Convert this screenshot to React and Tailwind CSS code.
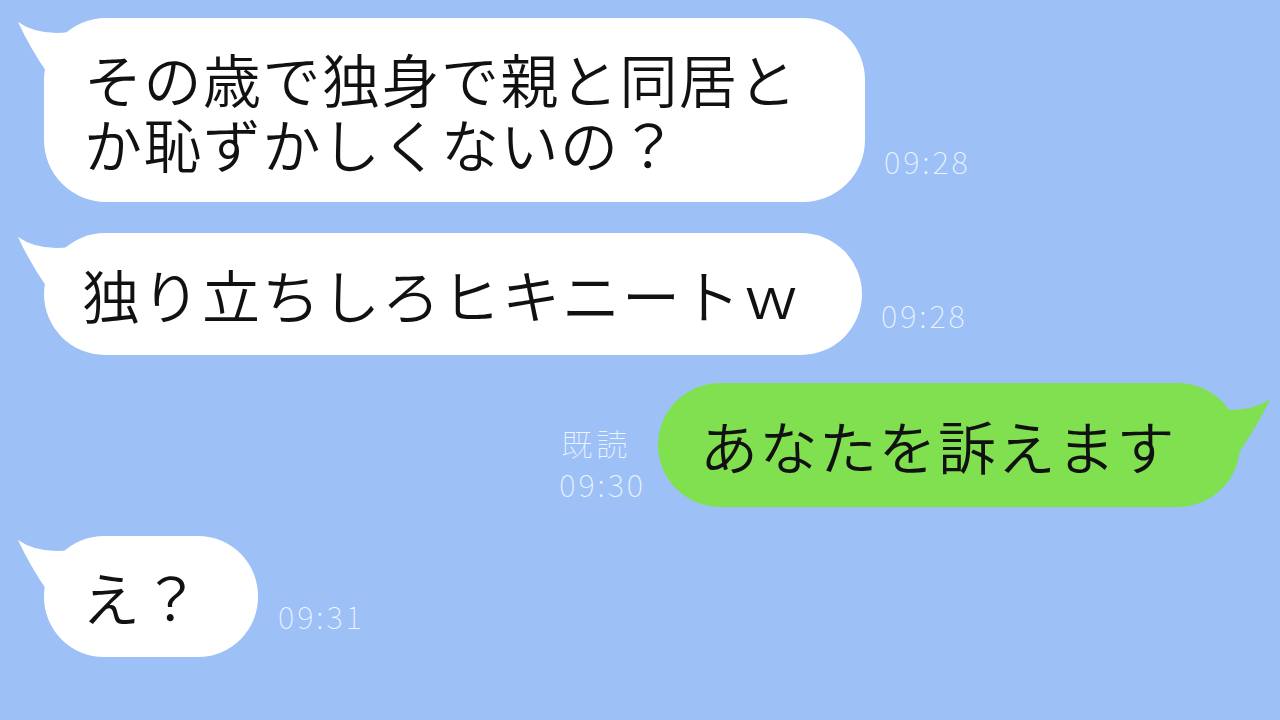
import React from "react";

const jp = { fontFamily: '"Noto Sans CJK JP", "Noto Sans", sans-serif' };

function LeftTail() {
  return (
    <svg className="absolute left-[-30px] top-0" width="80" height="64" viewBox="0 0 80 64">
      <path d="M4 4 Q 24 18 56 14 L 72 50 L 34 56 Q 16 30 4 4 Z" fill="#ffffff" />
    </svg>
  );
}

function RightTail() {
  return (
    <svg className="absolute right-[-34px] top-[12px]" width="80" height="64" viewBox="0 0 80 64">
      <path d="M76 4 Q 56 18 24 14 L 8 50 L 46 56 Q 64 30 76 4 Z" fill="#80e04f" />
    </svg>
  );
}

function Time({ children, className = "" }) {
  return (
    <div
      className={"text-[31px] leading-none font-thin text-[#eef4ff] tracking-[3px] " + className}
      style={jp}
    >
      {children}
    </div>
  );
}

export default function App() {
  return (
    <div className="w-[1280px] h-[720px] bg-[#9dc1f7] overflow-hidden flex flex-col pt-[18px]" style={jp}>
      <div className="flex items-end pl-[44px]">
        <div className="relative w-[821px] h-[184px] rounded-[62px] bg-white pl-[40px] pt-[28px]">
          <LeftTail />
          <div className="relative text-[58px] leading-[65px] font-[350] tracking-[1.5px] text-[#111] whitespace-nowrap">
            <div>その歳で独身で親と同居と</div>
            <div>か恥ずかしくないの？</div>
          </div>
        </div>
        <Time className="ml-[19px] mb-[26px]">09:28</Time>
      </div>

      <div className="flex items-end pl-[44px] mt-[31px]">
        <div className="relative w-[818px] h-[122px] rounded-[61px] bg-white pl-[38px] flex items-center">
          <LeftTail />
          <div className="relative text-[58px] leading-[65px] font-[350] tracking-[2px] text-[#111] whitespace-nowrap">
            独り立ちしろヒキニートｗ
          </div>
        </div>
        <Time className="ml-[19px] mb-[25px]">09:28</Time>
      </div>

      <div className="flex items-end justify-end pr-[40px] mt-[28px]">
        <div className="flex flex-col items-start mr-[12px] mb-[8px]">
          <div className="text-[31px] leading-none font-thin tracking-[4px] text-[#eef4ff] ml-[2px]">既読</div>
          <Time className="mt-[10px]">09:30</Time>
        </div>
        <div className="relative w-[582px] h-[124px] rounded-[62px] bg-[#80e04f] pl-[42px] flex items-center">
          <RightTail />
          <div className="relative text-[58px] leading-[65px] font-[350] tracking-[1.5px] text-[#111] whitespace-nowrap">
            あなたを訴えます
          </div>
        </div>
      </div>

      <div className="flex items-end pl-[44px] mt-[29px]">
        <div className="relative w-[214px] h-[121px] rounded-[60px] bg-white pl-[38px] flex items-center">
          <LeftTail />
          <div className="relative text-[58px] leading-[65px] font-[350] tracking-[2px] text-[#111] whitespace-nowrap">
            え？
          </div>
        </div>
        <Time className="ml-[20px] mb-[26px]">09:31</Time>
      </div>
    </div>
  );
}
